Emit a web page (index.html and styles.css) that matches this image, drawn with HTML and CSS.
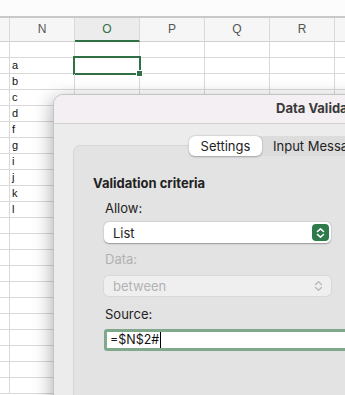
FILE: index.html
```html
<!DOCTYPE html>
<html lang="en">
<head>
    <meta charset="UTF-8">
    <meta name="viewport" content="width=device-width, initial-scale=1.0">
    <title>Data Validation</title>
    <link rel="stylesheet" href="styles.css">
</head>
<body>
    <div class="toolbar"></div>

    <!-- Sheet -->
    <div class="sheet">
        <div class="cell head"></div>
        <div class="cell head">N</div>
        <div class="cell head current">O</div>
        <div class="cell head">P</div>
        <div class="cell head">Q</div>
        <div class="cell head">R</div>
        <div class="cell head"></div>
    </div>
    <div class="sheet" id="rows"></div>

    <!-- Dialog over the sheet -->
    <div class="dialog">
        <div class="titlebar">Data Validation</div>
        <div class="dialog-body">
            <div class="tabs">
                <span class="tab selected">Settings</span>
                <span class="tab">Input Message</span>
                <span class="tab">Error Alert</span>
            </div>
            <div class="panel">
                <div class="section-title">Validation criteria</div>
                <div class="field">
                    <div class="label">Allow:</div>
                    <div class="select">
                        <span>List</span>
                        <span class="stepper">
                            <svg width="9" height="12" viewBox="0 0 9 12"><path d="M1.5 4.5 L4.5 1.8 L7.5 4.5 M1.5 7.5 L4.5 10.2 L7.5 7.5" fill="none" stroke="#fff" stroke-width="1.6" stroke-linecap="round" stroke-linejoin="round"/></svg>
                        </span>
                    </div>
                    <div class="label disabled">Data:</div>
                    <div class="select off">
                        <span>between</span>
                        <svg width="9" height="12" viewBox="0 0 9 12"><path d="M1.5 4.5 L4.5 1.8 L7.5 4.5 M1.5 7.5 L4.5 10.2 L7.5 7.5" fill="none" stroke="#b8b8b8" stroke-width="1.3" stroke-linecap="round" stroke-linejoin="round"/></svg>
                    </div>
                    <div class="label">Source:</div>
                    <div class="input">=$N$2#<span class="caret"></span></div>
                </div>
            </div>
        </div>
    </div>

    <script>
        // rows of the sheet, letters sit in column N
        var letters = ['', 'a', 'b', 'c', 'd', 'f', 'g', 'i', 'j', 'k', 'l'];
        var rows = document.getElementById('rows');
        for (var r = 0; r < 22; r++) {
            for (var c = 0; c < 7; c++) {
                var cell = document.createElement('div');
                cell.className = 'cell';
                if (c == 1) cell.innerText = letters[r] || '';
                if (r == 1 && c == 2) {
                    cell.className = 'cell active';
                    cell.innerHTML = '<span class="handle"></span>';
                }
                rows.appendChild(cell);
            }
        }
    </script>
</body>
</html>
```

FILE: styles.css
```css
body {
    margin: 0;
    width: 345px;
    height: 395px;
    overflow: hidden;
    position: relative;
    background: #fff;
    font-family: Inter, "Noto Sans", sans-serif;
}
.toolbar {
    height: 16px;
    background: #fcfcfc;
    border-bottom: 2px solid #c9c9c9;
}

/* Sheet grid */
.sheet {
    display: grid;
    grid-template-columns: 10px 65px 65px 65px 65px 65px 30px;
}
.cell {
    box-sizing: border-box;
    height: 16px;
    border-right: 1px solid #d9d9d9;
    border-bottom: 1px solid #d9d9d9;
    font-family: "Liberation Sans", Arial, sans-serif;
    font-size: 11px;
    line-height: 15px;
    padding-left: 2px;
    color: #111;
    position: relative;
}
.cell.head {
    height: 24px;
    line-height: 23px;
    background: #f6f6f6;
    text-align: center;
    padding: 0;
    color: #555;
    font-size: 12px;
    border-bottom-color: #d0d0d0;
}
.cell.head.current {
    background: #ececec;
    color: #2f7044;
    border-bottom: 2px solid #2f7044;
}
.cell.active::after {
    content: "";
    position: absolute;
    left: -2px;
    top: -2px;
    right: -2px;
    bottom: -2px;
    border: 2px solid #2f7044;
}
.handle {
    position: absolute;
    right: -4px;
    bottom: -4px;
    width: 5px;
    height: 5px;
    background: #2f7044;
    border: 1px solid #fff;
    z-index: 1;
}

/* Dialog */
.dialog {
    position: absolute;
    left: 53px;
    top: 94px;
    width: 420px;
    height: 420px;
    border-radius: 10px 0 0 0;
    background: #ececec;
    box-shadow: -2px 4px 18px rgba(0, 0, 0, 0.3);
    border: 1px solid #c4c4c4;
    box-sizing: border-box;
    overflow: hidden;
    font-size: 13px;
    color: #222;
}
.titlebar {
    height: 28px;
    line-height: 26px;
    background: #f4eff3;
    border-bottom: 1px solid #d2d2d2;
    padding-left: 222px;
    font-weight: 700;
    color: #3a3a3a;
    white-space: nowrap;
}
.dialog-body {
    padding: 12px 0 0 19px;
}
.tabs {
    display: flex;
    margin-left: 116px;
    height: 20px;
    background: #dcdcdc;
    border-radius: 6px;
    position: relative;
    z-index: 1;
    width: 300px;
    white-space: nowrap;
}
.tab {
    padding: 0 11px;
    line-height: 20px;
    color: #222;
}
.tab.selected {
    background: #fff;
    border-radius: 6px;
    box-shadow: 0 0.5px 2px rgba(0, 0, 0, 0.3);
    width: 73px;
    box-sizing: border-box;
    text-align: center;
    padding: 0;
}
.panel {
    margin-top: -11px;
    height: 300px;
    background: #e3e3e3;
    border: 1px solid #d6d6d6;
    border-radius: 7px;
    padding: 29px 0 0 19px;
}
.section-title {
    font-weight: 700;
    line-height: 16px;
}
.field {
    padding-left: 11px;
    margin-top: 9px;
}
.label {
    line-height: 16px;
    margin-left: 1px;
}
.label.disabled {
    color: #b2b2b2;
}
.select {
    margin-top: 6px;
    margin-bottom: 8px;
    width: 227px;
    height: 21px;
    box-sizing: border-box;
    background: #fff;
    border-radius: 5px;
    box-shadow: 0 0.5px 1.5px rgba(0, 0, 0, 0.35);
    display: flex;
    align-items: center;
    justify-content: space-between;
    padding: 0 2px 0 9px;
}
.stepper {
    width: 17px;
    height: 17px;
    background: #2e7a4a;
    border-radius: 4px;
    display: flex;
    align-items: center;
    justify-content: center;
}
.select.off {
    margin-top: 9px;
    margin-bottom: 10px;
    height: 20px;
    background: #efefef;
    color: #b2b2b2;
    box-shadow: 0 0 0 1px #d8d8d8;
    padding-right: 8px;
}
.input {
    margin-top: 7px;
    width: 260px;
    height: 22px;
    box-sizing: border-box;
    background: #fff;
    border: 3px solid #7fa98a;
    border-radius: 3px;
    line-height: 16px;
    padding-left: 3px;
    font-size: 12.5px;
    color: #111;
    display: flex;
    align-items: center;
}
.caret {
    width: 1px;
    height: 16px;
    background: #000;
    margin-left: 1px;
}
```
